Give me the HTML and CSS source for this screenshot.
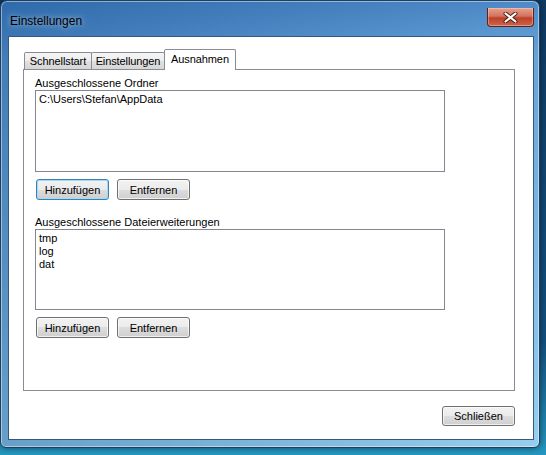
FILE: index.html
```html
<!DOCTYPE html>
<html lang="de">
<head>
    <meta charset="UTF-8">
    <meta name="viewport" content="width=device-width, initial-scale=1.0">
    <title>Einstellungen</title>
    <link rel="stylesheet" href="styles.css">
</head>
<body>
    <div class="window">
        <div class="titlebar">
            <span class="title">Einstellungen</span>
            <button class="close">
                <svg width="15" height="11" viewBox="0 0 15 11">
                    <path d="M2.5 1.5 L12.5 9.5 M12.5 1.5 L2.5 9.5" stroke="#4a1a12" stroke-width="4" stroke-linecap="round"/>
                    <path d="M2.5 1.5 L12.5 9.5 M12.5 1.5 L2.5 9.5" stroke="#fff" stroke-width="2.2" stroke-linecap="round"/>
                </svg>
            </button>
        </div>
        <div class="client">
            <div class="tabs">
                <div class="tab quick">Schnellstart</div>
                <div class="tab settings">Einstellungen</div>
                <div class="tab active">Ausnahmen</div>
            </div>
            <div class="panel">
                <div class="label">Ausgeschlossene Ordner</div>
                <div class="list">
                    <div class="item">C:\Users\Stefan\AppData</div>
                </div>
                <div class="buttons">
                    <button class="btn default">Hinzufügen</button>
                    <button class="btn">Entfernen</button>
                </div>
                <div class="label second">Ausgeschlossene Dateierweiterungen</div>
                <div class="list short">
                    <div class="item">tmp</div>
                    <div class="item">log</div>
                    <div class="item">dat</div>
                </div>
                <div class="buttons">
                    <button class="btn">Hinzufügen</button>
                    <button class="btn">Entfernen</button>
                </div>
            </div>
            <div class="footer">
                <button class="btn">Schließen</button>
            </div>
        </div>
    </div>
</body>
</html>
```

FILE: styles.css
```css
body {
    margin: 0;
    width: 546px;
    height: 455px;
    overflow: hidden;
    background: linear-gradient(to bottom, #0f3a63 0%, #13507f 75%, #2597c0 100%);
    font-family: 'Liberation Sans', Arial, sans-serif;
    font-size: 11px;
    color: #000;
}
.window {
    width: 540px;
    height: 448px;
    box-sizing: border-box;
    border: 1px solid #1e3f5e;
    border-radius: 7px 7px 6px 6px;
    background:
        linear-gradient(to right, rgba(20, 60, 120, 0.3), rgba(255, 255, 255, 0.1)),
        linear-gradient(to bottom, #3a7dc1 0%, #5699d4 12%, #72b4e2 60%, #8acaec 100%);
    box-shadow: inset 0 0 0 1px rgba(255, 255, 255, 0.45), 0 0 6px rgba(0, 0, 0, 0.5);
    display: flex;
    flex-direction: column;
}
.titlebar {
    height: 35px;
    display: flex;
    justify-content: space-between;
    align-items: flex-start;
    padding-left: 9px;
}
.title {
    margin-top: 13px;
    font-size: 12px;
    line-height: 14px;
    color: #000;
    text-shadow: 0 0 6px rgba(255, 255, 255, 0.7);
}
.close {
    margin-top: 7px;
    margin-right: 5px;
    width: 47px;
    height: 19px;
    padding: 0;
    border: 1px solid #5e2318;
    border-top: none;
    border-radius: 0 0 4px 4px;
    background: linear-gradient(to bottom, #e5a090 0%, #d4735e 45%, #bf3f28 55%, #cc664e 100%);
    box-shadow: inset 0 0 0 1px rgba(255, 220, 210, 0.4);
    display: flex;
    justify-content: center;
    align-items: center;
}
.client {
    margin: 0 5px 0 7px;
    height: 404px;
    box-sizing: border-box;
    border: 1px solid #36597a;
    background-color: #fff;
    padding: 12px 18px 0 14px;
}
.tabs {
    display: flex;
    align-items: flex-end;
    height: 20px;
    padding-left: 1px;
}
.tab {
    height: 17px;
    box-sizing: border-box;
    padding-top: 2px;
    border: 1px solid #898c95;
    border-bottom: none;
    border-radius: 2px 2px 0 0;
    background: linear-gradient(to bottom, #f5f5f5 0%, #ededed 50%, #e0e0e0 50%, #d6d6d6 100%);
    line-height: 13px;
    text-align: center;
    white-space: nowrap;
    letter-spacing: -0.1px;
}
.tab + .tab {
    margin-left: -1px;
}
.tab.quick {
    width: 68px;
}
.tab.settings {
    width: 74px;
}
.tab.active {
    position: relative;
    z-index: 1;
    width: 72px;
    height: 21px;
    margin-bottom: -1px;
    padding-top: 3px;
    background: #fff;
}
.panel {
    height: 322px;
    box-sizing: border-box;
    border: 1px solid #898c95;
    padding: 6px 11px 0 11px;
}
.label {
    line-height: 14px;
}
.label.second {
    margin-top: 15px;
}
.list {
    width: 410px;
    height: 82px;
    box-sizing: border-box;
    border: 1px solid #828790;
    padding: 2px 3px;
}
.list.short {
    height: 81px;
}
.item {
    line-height: 13px;
}
.buttons {
    display: flex;
    gap: 8px;
    margin-top: 7px;
    padding-left: 1px;
}
.btn {
    width: 73px;
    height: 21px;
    padding: 0;
    border: 1px solid #707070;
    border-radius: 3px;
    background: linear-gradient(to bottom, #f2f2f2 0%, #ebebeb 50%, #dddddd 50%, #cfcfcf 100%);
    box-shadow: inset 0 0 0 1px rgba(255, 255, 255, 0.7);
    font-family: 'Liberation Sans', Arial, sans-serif;
    font-size: 11px;
    color: #000;
}
.btn.default {
    border-color: #3c7fb1;
    box-shadow: inset 0 0 0 1px #9fdcf5;
}
.footer {
    display: flex;
    justify-content: flex-end;
    margin-top: 15px;
}
.footer .btn {
    height: 20px;
}
```
